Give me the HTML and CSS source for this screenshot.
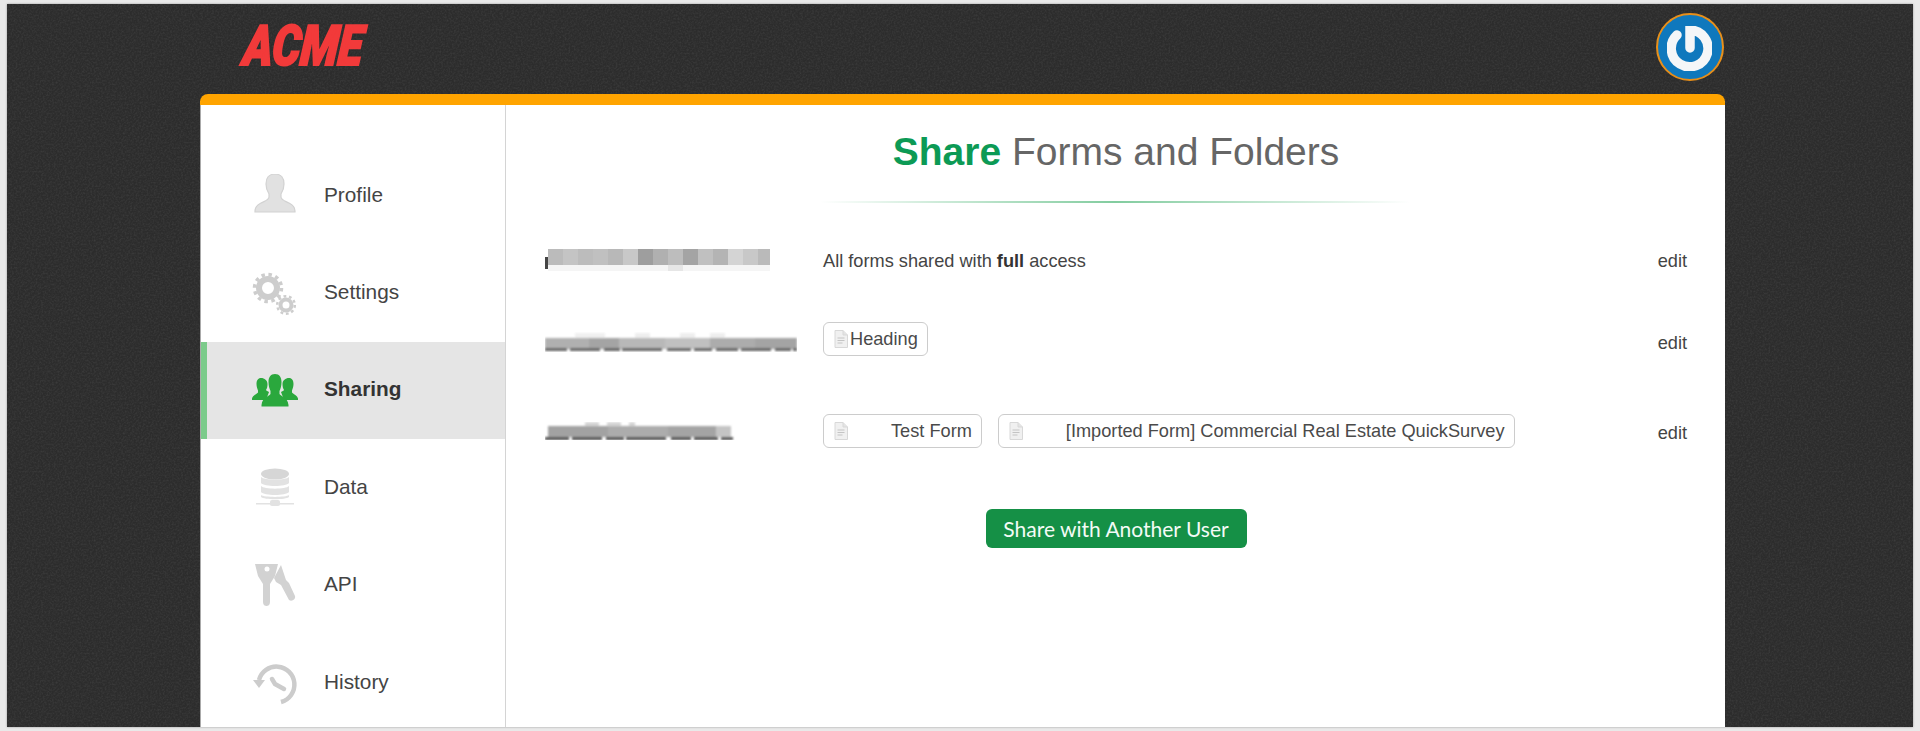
FILE: index.html
```html
<!DOCTYPE html>
<html lang="en">
<head>
<meta charset="utf-8">
<title>Share Forms and Folders</title>
<link rel="stylesheet" href="styles.css">
</head>
<body>
<svg class="defs" width="0" height="0" aria-hidden="true">
  <defs>
    <filter id="soft"><feGaussianBlur stdDeviation="0.6"/></filter>
    <filter id="smudge"><feGaussianBlur stdDeviation="0.9"/></filter>
    <symbol id="doc" viewBox="0 0 14 18">
      <path d="M1 0.5h8l4.5 4.5v12.5h-12.5z" fill="#f0f0f0" stroke="#d8d8d8"/>
      <path d="M9 0.5v4.500h4.500" fill="#e4e4e4" stroke="#d8d8d8"/>
      <path d="M3.500 8h7M3.500 10.500h7M3.500 13h5" stroke="#c4c4c4" stroke-width="1.200"/>
    </symbol>
  </defs>
</svg>
<div class="window">
  <header class="topbar">
    <div class="logo">ACME</div>
    <div class="avatar">
      <svg viewBox="0 0 64 64" width="64" height="64">
        <g filter="url(#soft)" fill="none" stroke="#f4f6f8" stroke-width="9.500" stroke-linecap="round">
          <path d="M19 20a18.400 18.400 0 1 0 13 -5v18"/>
        </g>
      </svg>
    </div>
  </header>
  <div class="card">
    <nav class="side">
      <a class="nav-item">
        <span class="nav-icon">
          <svg viewBox="0 3 48 44" width="48" height="44">
            <path d="M24 3c-6 0-9 4-9 10 0 4 1 7 3 10v3c0 3-4 4-8 6-4 2-6 4-6 8v1h40v-1c0-4-2-6-6-8-4-2-8-3-8-6v-3c2-3 3-6 3-10 0-6-3-10-9-10z" fill="#e1e1e1" stroke="#d2d2d2" stroke-width="1.200" filter="url(#soft)"/>
          </svg>
        </span>
        <span class="nav-label">Profile</span>
      </a>
      <a class="nav-item">
        <span class="nav-icon">
          <svg viewBox="0 0 48 44" width="48" height="44">
            <g filter="url(#soft)" fill="none" stroke="#cdcdcd">
              <circle cx="17" cy="17" r="9" stroke-width="6"/>
              <circle cx="17" cy="17" r="13.500" stroke-width="3.500" stroke-dasharray="3.500 3.570"/>
              <circle cx="35" cy="34" r="5.500" stroke-width="4"/>
              <circle cx="35" cy="34" r="8.800" stroke-width="2.500" stroke-dasharray="2.800 2.730"/>
            </g>
          </svg>
        </span>
        <span class="nav-label">Settings</span>
      </a>
      <a class="nav-item is-active">
        <span class="nav-icon">
          <svg viewBox="0 0 48 36" width="48" height="36">
            <g fill="#2ca83c" filter="url(#soft)">
              <path d="M10 6c-3 0-4.500 2.500-4.500 6 0 3 1 5 1.500 6.500v2c-1 1.500-5 2.500-6 6v1.500h14l3-8c-1-1-3-1-3-2 1-1.500 1.500-3.500 1.500-6 0-3.500-3-6-6.500-6z"/>
              <path d="M38 6c3 0 4.500 2.500 4.500 6 0 3-1 5-1.500 6.500v2c1 1.500 5 2.500 6 6v1.500h-14l-3-8c1-1 3-1 3-2-1-1.500-1.500-3.500-1.500-6 0-3.500 3-6 6.500-6z"/>
              <path d="M24 2c-4.500 0-6.500 3.500-6.500 8 0 4 1 7 2 9v3c-2 3-8 3-9 11v1.500h27v-1.500c-1-8-7-8-9-11v-3c1-2 2-5 2-9 0-4.500-2-8-6.500-8z"/>
            </g>
          </svg>
        </span>
        <span class="nav-label">Sharing</span>
      </a>
      <a class="nav-item">
        <span class="nav-icon">
          <svg viewBox="0 0 48 40" width="48" height="40">
            <g filter="url(#soft)" fill="#e2e2e2">
              <ellipse cx="24" cy="6" rx="14" ry="5.500" fill="#d6d6d6"/>
              <path d="M10 9c3 3.500 25 3.500 28 0v6c-3 4-25 4-28 0z"/>
              <path d="M10 18c3 3.500 25 3.500 28 0v6c-3 4-25 4-28 0z"/>
              <path d="M10 27c3 2.500 25 2.500 28 0v2c-3 3-25 3-28 0z"/>
              <rect x="5" y="35" width="38" height="1.500"/>
              <rect x="19" y="32" width="10" height="6" rx="2"/>
            </g>
          </svg>
        </span>
        <span class="nav-label">Data</span>
      </a>
      <a class="nav-item">
        <span class="nav-icon">
          <svg viewBox="0 0 48 46" width="48" height="46">
            <g filter="url(#soft)" transform="translate(4 0)">
              <path d="M0 2h23l-3 12-5 8v18c0 3-2 4-3.500 4s-3.500-1-3.500-4v-18l-5-8z" fill="#d2d2d2"/>
              <circle cx="12" cy="7" r="2.500" fill="#fff"/>
              <path d="M26 3l3 9 2 6 3 3 6 13c1 3-3 6-6 4l-8-15-5-3-2-4z" fill="#d2d2d2"/>
            </g>
          </svg>
        </span>
        <span class="nav-label">API</span>
      </a>
      <a class="nav-item">
        <span class="nav-icon">
          <svg viewBox="0 0 48 44" width="48" height="44">
            <g filter="url(#soft)" fill="none" stroke="#cccccc" transform="translate(2 0)">
              <path d="M6 19a18 18 0 1 1 22 22" stroke-width="4.500"/>
              <path d="M0 19h12l-6 8z" fill="#cccccc" stroke="none"/>
              <path d="M19 18l3 5 9 5" stroke-width="4.500" stroke-linecap="round"/>
            </g>
          </svg>
        </span>
        <span class="nav-label">History</span>
      </a>
    </nav>
    <main class="content">
      <h1 class="title"><strong>Share</strong> Forms and Folders</h1>
      <div class="divider"></div>
      <section class="rows">
        <div class="row row-first">
          <div class="email">
            <svg viewBox="0 0 228 26" width="228" height="26">
              <g filter="url(#soft)">
                <rect x="0" y="9" width="5" height="12" fill="#444"/>
                <rect x="3" y="1" width="15" height="16" fill="#bbb"/>
                <rect x="18" y="1" width="15" height="16" fill="#c4c4c4"/>
                <rect x="33" y="1" width="15" height="16" fill="#bcbcbc"/>
                <rect x="48" y="1" width="15" height="16" fill="#c0c0c0"/>
                <rect x="63" y="1" width="15" height="16" fill="#b8b8b8"/>
                <rect x="78" y="1" width="15" height="16" fill="#c8c8c8"/>
                <rect x="93" y="1" width="15" height="16" fill="#9e9e9e"/>
                <rect x="108" y="1" width="15" height="16" fill="#b0b0b0"/>
                <rect x="123" y="1" width="15" height="16" fill="#bdbdbd"/>
                <rect x="138" y="1" width="15" height="16" fill="#a4a4a4"/>
                <rect x="153" y="1" width="15" height="16" fill="#c0c0c0"/>
                <rect x="168" y="1" width="15" height="16" fill="#b4b4b4"/>
                <rect x="183" y="1" width="15" height="16" fill="#d4d4d4"/>
                <rect x="198" y="1" width="15" height="16" fill="#c8c8c8"/>
                <rect x="213" y="1" width="12" height="16" fill="#bababa"/>
                <rect x="3" y="17" width="222" height="6" fill="#f5f5f5"/>
                <rect x="123" y="17" width="15" height="6" fill="#e6e6e6"/>
              </g>
            </svg>
          </div>
          <div class="items"><p class="access">All forms shared with <b>full</b> access</p></div>
          <a class="edit">edit</a>
        </div>
        <div class="row row-second">
          <div class="email">
            <svg viewBox="0 0 252 22" width="252" height="22">
              <g filter="url(#smudge)">
                <rect x="30" y="1" width="30" height="6" fill="#f0f0f0"/>
                <rect x="90" y="1" width="15" height="6" fill="#eee"/>
                <rect x="135" y="1" width="15" height="6" fill="#eee"/>
                <rect x="165" y="1" width="15" height="6" fill="#eee"/>
                <rect x="0" y="6" width="44" height="11" fill="#b0b0b0"/>
                <rect x="44" y="6" width="30" height="11" fill="#a4a4a4"/>
                <rect x="74" y="6" width="46" height="11" fill="#b8b8b8"/>
                <rect x="120" y="6" width="45" height="11" fill="#c0c0c0"/>
                <rect x="165" y="6" width="45" height="11" fill="#acacac"/>
                <rect x="210" y="6" width="42" height="11" fill="#a4a4a4"/>
                <path d="M0 17.500h252" stroke="#666" stroke-width="3" stroke-dasharray="22 3 30 4 16 2 40 5 24 3 18 4"/>
              </g>
            </svg>
          </div>
          <div class="items items-up">
            <span class="chip"><svg class="doc" width="14" height="18"><use href="#doc"/></svg><span class="chip-gap-small">Heading</span></span>
          </div>
          <a class="edit">edit</a>
        </div>
        <div class="row row-third">
          <div class="email">
            <svg viewBox="0 0 190 22" width="190" height="22">
              <g filter="url(#smudge)">
                <path d="M40 2h50" stroke="#ccc" stroke-width="3" stroke-dasharray="14 8"/>
                <rect x="3" y="4" width="60" height="11" fill="#a2a2a2"/>
                <rect x="63" y="4" width="60" height="11" fill="#acacac"/>
                <rect x="123" y="4" width="48" height="11" fill="#a4a4a4"/>
                <rect x="171" y="4" width="15" height="11" fill="#c4c4c4"/>
                <path d="M0 16.500h188" stroke="#555" stroke-width="3" stroke-dasharray="24 3 30 4 18 2 40 5 20 3"/>
              </g>
            </svg>
          </div>
          <div class="items items-up-small">
            <span class="chip"><svg class="doc" width="14" height="18"><use href="#doc"/></svg><span class="chip-gap-wide">Test Form</span></span>
            <span class="chip"><svg class="doc" width="14" height="18"><use href="#doc"/></svg><span class="chip-gap-wide">[Imported Form] Commercial Real Estate QuickSurvey</span></span>
          </div>
          <a class="edit">edit</a>
        </div>
      </section>
      <div class="actions"><button class="share-btn">Share with Another User</button></div>
    </main>
  </div>
</div>
</body>
</html>
```

FILE: styles.css
```css
* { box-sizing: border-box; }
html, body { height: 100%; }
body {
  margin: 0;
  padding: 4px 7px 4px 7px;
  background: #e9e9e9;
  font-family: "Liberation Sans", Arial, sans-serif;
  color: #444;
  overflow: hidden;
}
.defs { position: absolute; }
.window {
  height: 723px;
  background-color: #2c2c2c;
  background-image: url("data:image/svg+xml,%3Csvg xmlns='http://www.w3.org/2000/svg' width='300' height='300'%3E%3Cfilter id='n'%3E%3CfeTurbulence type='fractalNoise' baseFrequency='0.55' numOctaves='2' stitchTiles='stitch'/%3E%3CfeColorMatrix values='0 0 0 0 0.5 0 0 0 0 0.5 0 0 0 0 0.5 0.9 0 0 0 -0.35'/%3E%3C/filter%3E%3Crect width='300' height='300' filter='url(%23n)' opacity='0.22'/%3E%3C/svg%3E");
  box-shadow: 0 0 2px #999;
  display: flex;
  flex-direction: column;
  overflow: hidden;
}
.topbar {
  height: 90px;
  flex: none;
  padding: 9px 189px 0 235px;
  display: flex;
  justify-content: space-between;
  align-items: flex-start;
}
.logo {
  margin-top: 10px;
  font-family: Roboto, "Liberation Sans", sans-serif;
  font-style: italic;
  font-weight: 900;
  font-size: 56px;
  line-height: 46px;
  color: #f23a3a;
  -webkit-text-stroke: 2px #f23a3a;
  letter-spacing: -0.5px;
  transform: skewX(-5deg) scaleX(0.8);
  transform-origin: left bottom;
}
.avatar {
  width: 68px;
  height: 68px;
  border-radius: 50%;
  background: #0f78bd;
  border: 2px solid #e88f1a;
  display: flex;
  align-items: center;
  justify-content: center;
}
.card {
  flex: 1;
  min-height: 0;
  margin: 0 188px 0 193px;
  background: #fff;
  border-top: 11px solid #ffa400;
  border-radius: 8px 8px 0 0;
  display: flex;
}
.side {
  width: 306px;
  flex: none;
  padding-top: 42px;
  border-right: 1px solid #d4d4d4;
  border-left: 1px solid #aaa;
}
.nav-item {
  height: 97.4px;
  padding-left: 50px;
  display: flex;
  align-items: center;
  gap: 25px;
  font-size: 20.8px;
  color: #444;
}
.nav-label { padding-bottom: 2px; }
.nav-item.is-active {
  background: #e5e5e5;
  border-left: 6px solid #7ccb8b;
  padding-left: 44px;
  font-weight: 700;
  color: #333;
}
.nav-icon {
  width: 48px;
  display: flex;
  justify-content: center;
  align-items: center;
}
.content {
  flex: 1;
  min-width: 0;
  padding: 0 38px 0 39px;
}
.title {
  margin: 22px 0 0;
  text-align: center;
  font-size: 39px;
  line-height: 50px;
  font-weight: 400;
  color: #666;
}
.title strong { color: #0c9a55; font-weight: 700; }
.divider {
  height: 2px;
  margin: 24px 277px 0 275px;
  background: linear-gradient(90deg, rgba(124,200,154,0), #82cc9f 50%, rgba(124,200,154,0));
}
.rows { margin-top: 38px; }
.row {
  display: flex;
  align-items: center;
  font-size: 18.2px;
}
.row-first { height: 40px; }
.row-second { height: 40px; margin-top: 42px; }
.row-third { height: 40px; margin-top: 50px; }
.email {
  width: 278px;
  flex: none;
  display: flex;
}
.items {
  flex: 1;
  display: flex;
  gap: 16px;
  align-items: center;
}
.items-up { margin-bottom: 8px; }
.items-up-small { margin-bottom: 4px; }
.access { margin: 0; }
.access b { color: #333; }
.edit { color: #444; }
.chip {
  height: 34px;
  padding: 0 9px 0 10px;
  border: 1px solid #ccc;
  border-radius: 6px;
  display: inline-flex;
  align-items: center;
  white-space: nowrap;
  color: #4a4a4a;
}
.doc { flex: none; }
.chip-gap-small { margin-left: 2px; }
.chip-gap-wide { margin-left: 43px; }
.actions {
  margin-top: 56px;
  display: flex;
  justify-content: center;
}
.share-btn {
  width: 261px;
  height: 39px;
  border: 0;
  border-radius: 6px;
  background: #159046;
  color: #f4fbf6;
  font-family: Lato, sans-serif;
  font-size: 21px;
}
```
